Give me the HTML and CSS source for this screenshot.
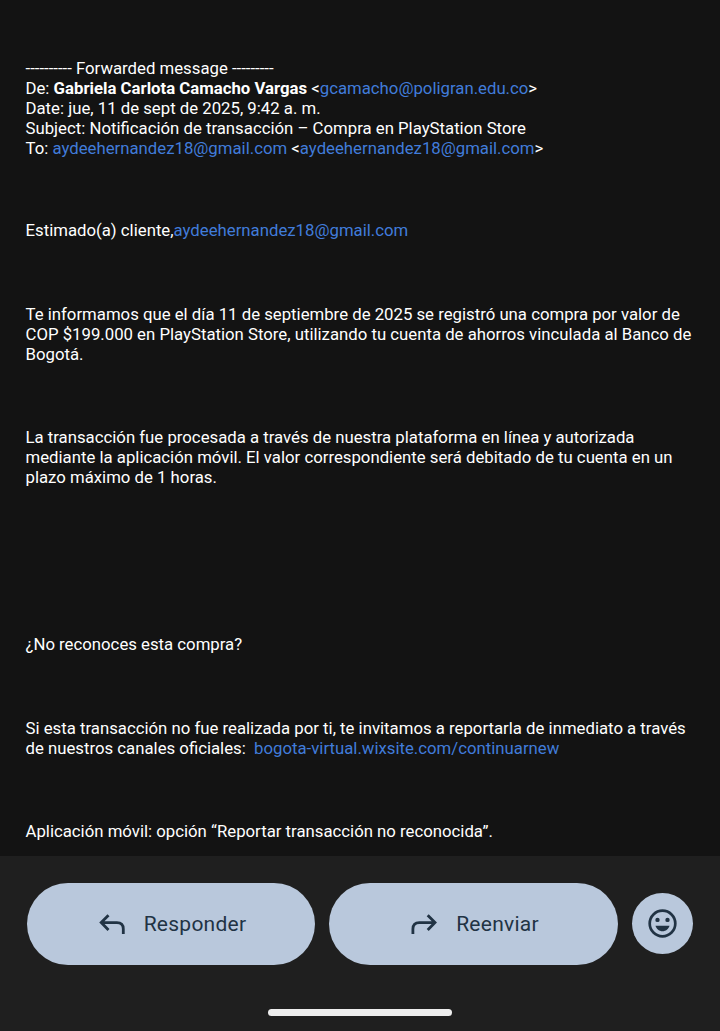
FILE: index.html
```html
<!DOCTYPE html>
<html lang="es">
  <head>
    <meta charset="utf-8">
    <meta name="viewport" content="width=device-width, initial-scale=1">
    <title>Notificación de transacción</title>
    <link rel="stylesheet" href="styles.css">
  </head>

  <body>
    <main class="message">
      <p class="forwarded">
        ---------- Forwarded message ---------<br>
        De: <b>Gabriela Carlota Camacho Vargas</b> &lt;<a href="#">gcamacho@poligran.edu.co</a>&gt;<br>
        Date: jue, 11 de sept de 2025, 9:42 a. m.<br>
        Subject: Notificación de transacción – Compra en PlayStation Store<br>
        To: <a href="#">aydeehernandez18@gmail.com</a> &lt;<a href="#">aydeehernandez18@gmail.com</a>&gt;
      </p>

      <p class="greeting">Estimado(a) cliente,<a href="#">aydeehernandez18@gmail.com</a></p>

      <p>Te informamos que el día 11 de septiembre de 2025 se registró una compra por valor de<br>
        COP $199.000 en PlayStation Store, utilizando tu cuenta de ahorros vinculada al Banco de<br>
        Bogotá.</p>

      <p>La transacción fue procesada a través de nuestra plataforma en línea y autorizada<br>
        mediante la aplicación móvil. El valor correspondiente será debitado de tu cuenta en un<br>
        plazo máximo de 1 horas.</p>

      <p class="question">¿No reconoces esta compra?</p>

      <p>Si esta transacción no fue realizada por ti, te invitamos a reportarla de inmediato a través<br>
        de nuestros canales oficiales:&nbsp; <a href="#">bogota-virtual.wixsite.com/continuarnew</a></p>

      <p>Aplicación móvil: opción “Reportar transacción no reconocida”.</p>
    </main>

    <footer class="footer">
      <div class="actions">
        <button class="pill reply">
          <svg class="arrow" width="28" height="24" viewBox="0 0 28 24">
            <path d="M10.5 3.2 3.2 10.6l7.3 7.4M3.2 10.6h15.7q6.4 0 6.4 6.4v4.9"/>
          </svg>
          <span>Responder</span>
        </button>
        <button class="pill forward">
          <svg class="arrow" width="28" height="24" viewBox="0 0 28 24">
            <path d="m17.7 3.2 7.3 7.4-7.3 7.4M25 10.6H9.3q-6.4 0-6.4 6.4v4.9"/>
          </svg>
          <span>Reenviar</span>
        </button>
        <button class="emoji" aria-label="Emoji">
          <svg width="30" height="30" viewBox="0.5 0.5 30 30">
            <circle class="face" cx="15" cy="15" r="12.8"/>
            <circle cx="10" cy="11.4" r="2.2"/>
            <circle cx="20" cy="11.4" r="2.2"/>
            <path d="M8 17.2h14c-1 3.3-3.7 5.5-7 5.5s-6-2.2-7-5.5z"/>
          </svg>
        </button>
      </div>
      <div class="handle"></div>
    </footer>
  </body>
</html>
```
FILE: styles.css
```css
body {
  display: flex;
  flex-direction: column;
  height: 1031px;
  margin: 0;
  overflow: hidden;
  background-color: #131313;
  color: #fff;
  font-family: Roboto, sans-serif;
}

a {
  color: #417cda;
  text-decoration: none;
}

.message {
  flex: 1;
  min-height: 0;
  padding: 58px 0 0 25.5px;
  box-sizing: border-box;
  font-size: 16.76px;
  line-height: 20px;
  white-space: nowrap;
}

.message p {
  margin: 0 0 63px;
}

.message .forwarded {
  margin-bottom: 62px;
}

.message .greeting {
  margin-bottom: 64px;
}

.message .question {
  margin: 147px 0 64px;
}

.message p:last-child {
  margin-bottom: 0;
}

.footer {
  display: flex;
  flex: none;
  flex-direction: column;
  align-items: center;
  box-sizing: border-box;
  height: 175px;
  padding-top: 27px;
  background-color: #1f1f1f;
}

.actions {
  display: flex;
  align-items: center;
  align-self: stretch;
  gap: 14px;
  padding: 0 27px;
}

.pill {
  display: flex;
  flex: 1;
  align-items: center;
  justify-content: center;
  gap: 18px;
  height: 82px;
  padding: 0;
  border: 0;
  border-radius: 41px;
  background-color: #b9c8dc;
  color: #213344;
  font-family: Roboto, sans-serif;
  font-size: 21px;
  letter-spacing: .25px;
}

.reply {
  flex: 0 0 288px;
  padding-left: 2px;
  box-sizing: border-box;
}

.forward {
  padding-left: 2px;
}

.arrow {
  fill: none;
  stroke: #213344;
  stroke-width: 2.8;
}

.emoji {
  display: flex;
  align-items: center;
  justify-content: center;
  width: 61px;
  height: 61px;
  margin-bottom: 1px;
  padding: 0;
  border: 0;
  border-radius: 50%;
  background-color: #b9c8dc;
  fill: #213344;
}

.face {
  fill: none;
  stroke: #213344;
  stroke-width: 2.7;
}

.handle {
  width: 184px;
  height: 7px;
  margin-top: 44px;
  border-radius: 3.5px;
  background-color: #ededed;
}
```
